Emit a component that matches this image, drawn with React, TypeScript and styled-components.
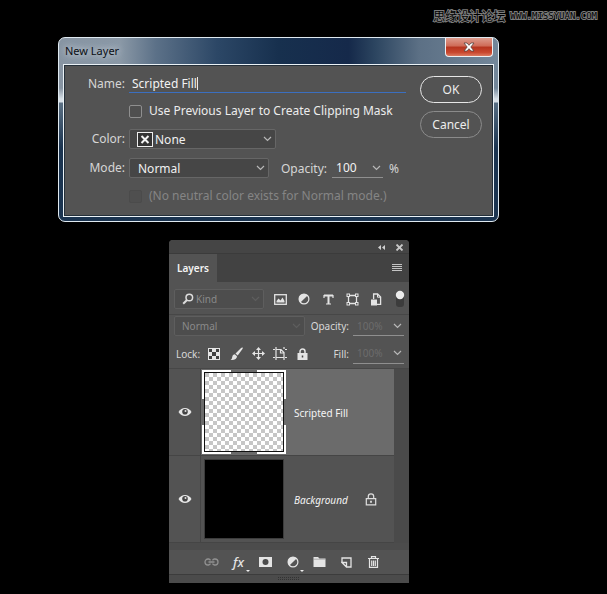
import React from "react";
import styled, { createGlobalStyle, css } from "styled-components";

const Global = createGlobalStyle`
  * { box-sizing: border-box; }
  body { margin: 0; background: #000; font-family: "Noto Sans", "Open Sans", sans-serif; }
  button, input, select { font: inherit; color: inherit; margin: 0; }
  button { padding: 0; background: none; border: 0; }
`;

const Page = styled.main`
  min-height: 100vh;
  background: #000;
`;

const Watermark = styled.header`
  display: flex;
  justify-content: flex-end;
  align-items: center;
  gap: 5px;
  height: 37px;
  padding: 0 10px 5px;
  color: #000;
  -webkit-text-stroke: 2px #7c7c7c;
  paint-order: stroke fill;
`;

const ForumName = styled.span`
  font: 12px/16px "Noto Sans CJK SC", sans-serif;
`;

const ForumSite = styled.span`
  font: 9px/16px "DejaVu Sans Mono", monospace;
`;

const Desktop = styled.div`
  padding: 0 108px 11px 58px;
`;

/* ---------- New Layer dialog ---------- */

const Dialog = styled.section`
  border: 1px solid #dfe9f0;
  border-radius: 7px;
  padding: 0 4px 4px;
  background:
    linear-gradient(to bottom, transparent 0, transparent 50px, rgba(225, 232, 238, 0.9) 61px, rgba(225, 232, 238, 0.9) 64px, rgba(74, 98, 120, 0.7) 65px, #1b3450 110px),
    linear-gradient(to right, #8794a2 0, #8a98a6 14%, #5c7188 22%, #2c4766 36%, #17304e 50%, #15294a 66%, #2c4560 72%, #5c7085 82%, #73879a 100%);
`;

const TitleBar = styled.header`
  display: flex;
  justify-content: space-between;
  align-items: flex-start;
  height: 26px;
  padding: 0 1px 0 2px;
`;

const Title = styled.h1`
  margin: 4px 0 0;
  font-size: 11px;
  line-height: 17px;
  font-weight: 400;
  color: #0b0f14;
  text-shadow: 0 0 6px #cdd6de, 0 0 8px #b9c4cf;
`;

const WindowClose = styled.button`
  display: grid;
  place-items: center;
  width: 48px;
  height: 19px;
  border: 1px solid #eef0f2;
  border-top: 0;
  border-radius: 0 0 4px 4px;
  background: linear-gradient(#dd9c8e 0, #cf6a56 45%, #b5331e 50%, #c9472e 80%, #dd7a60 100%);
`;

const DialogBody = styled.form`
  display: flex;
  justify-content: space-between;
  gap: 14px;
  padding: 10px 11px 11px 0;
  border: 1px solid #eaf1f5;
  box-shadow: inset 0 0 0 1px #25303a;
  background: #535353;
  color: #d6d6d6;
  font-size: 12px;
`;

const Fields = styled.div`
  flex: 1;
  min-width: 0;
  display: grid;
  grid-template-columns: 61px minmax(0, 1fr);
  grid-template-rows: 18px 18px 20px 20px 18px;
  column-gap: 4px;
  row-gap: 9px;
  align-items: center;
`;

const FieldLabel = styled.label`
  text-align: right;
  line-height: 18px;
`;

const NameField = styled.div`
  display: flex;
  align-items: center;
  height: 18px;
  padding-left: 3px;
  border-bottom: 1px solid #3b6fc0;
`;

const NameInput = styled.input`
  field-sizing: content;
  max-width: 95%;
  height: 17px;
  padding: 0;
  border: 0;
  outline: 0;
  background: transparent;
  color: #f2f2f2;
  caret-color: transparent;
`;

const Caret = styled.span`
  width: 1px;
  height: 13px;
  background: #e8e8e8;
`;

const CheckRow = styled.label<{ $off?: boolean }>`
  grid-column: 2;
  display: flex;
  align-items: center;
  gap: 7px;
  line-height: 18px;
  white-space: nowrap;
  color: ${(p) => (p.$off ? "#858585" : "#ececec")};
`;

const Check = styled.input`
  appearance: none;
  flex: none;
  width: 13px;
  height: 13px;
  margin: 0;
  border: 1px solid #8f8f8f;
  border-radius: 2px;
  background: #4f4f4f;
  &:disabled { border-color: #4b4b4b; }
`;

const Inline = styled.div`
  display: flex;
  align-items: center;
`;

const SelectBox = styled.div<{ $w: number; $dim?: boolean }>`
  display: grid;
  grid-template-columns: auto 1fr auto;
  align-items: center;
  flex: none;
  width: ${(p) => p.$w}px;
  height: 20px;
  border: 1px solid #666;
  border-radius: 2px;
  background: #464646;
  ${(p) => p.$dim && css`
    border-color: #5e5e5e;
    background: #4d4d4d;
  `}
  > * { grid-row: 1; }
  > svg { pointer-events: none; z-index: 1; }
  > svg:first-child { grid-column: 1; margin-left: 7px; }
  > svg:last-child { grid-column: 3; margin-right: 3px; }
`;

const Select = styled.select<{ $pad: number }>`
  appearance: none;
  grid-column: 1 / -1;
  width: 100%;
  height: 18px;
  padding: 0 16px 0 ${(p) => p.$pad}px;
  border: 0;
  outline: 0;
  background: transparent;
  color: #f0f0f0;
  &:disabled { color: #8a8a8a; opacity: 1; }
`;

const Amount = styled.div<{ $dim?: boolean }>`
  display: flex;
  align-items: center;
  flex: none;
  width: 51px;
  height: 20px;
  padding-right: 2px;
  border-bottom: 1px solid #8f8f8f;
  color: ${(p) => (p.$dim ? "#6c6c6c" : "#f2f2f2")};
  input {
    flex: 1;
    min-width: 0;
    height: 18px;
    padding: 0 0 0 4px;
    border: 0;
    outline: 0;
    background: transparent;
  }
  button { display: grid; place-items: center; }
`;

const OpacityLabel = styled.label`
  margin: 0 5px 0 12px;
`;

const Percent = styled.span`
  margin-left: 6px;
`;

const Actions = styled.div`
  display: flex;
  flex-direction: column;
  gap: 8px;
  padding-top: 1px;
`;

const PillButton = styled.button<{ $primary?: boolean }>`
  width: 62px;
  height: 27px;
  border: 1px solid ${(p) => (p.$primary ? "#e6e6e6" : "#8b8b8b")};
  border-radius: 14px;
  color: #ededed;
`;

/* ---------- Layers panel ---------- */

const Panel = styled.aside`
  width: 240px;
  max-width: 100%;
  margin: 18px 0 0 111px;
  border-radius: 4px 4px 0 0;
  overflow: hidden;
  background: #535353;
  color: #d8d8d8;
  font-size: 10px;
`;

const PanelTop = styled.div`
  display: flex;
  justify-content: flex-end;
  align-items: center;
  gap: 9px;
  height: 14px;
  padding: 2px 5px 0 0;
  background: #454545;
  border-bottom: 1px solid #3b3b3b;
  button { display: grid; }
`;

const TabBar = styled.div`
  display: flex;
  justify-content: space-between;
  align-items: center;
  height: 28px;
  padding-right: 7px;
  background: #424242;
`;

const Tab = styled.button`
  width: 48px;
  height: 28px;
  background: #535353;
  color: #f4f4f4;
  font-weight: 600;
`;

const IconButton = styled.button<{ $w?: number }>`
  display: grid;
  place-items: center;
  flex: none;
  width: ${(p) => p.$w ?? 24}px;
  height: 20px;
  color: #e4e4e4;
`;

const FilterRow = styled.div`
  display: flex;
  align-items: center;
  height: 33px;
  padding: 2px 2px 0 5px;
  border-bottom: 1px solid #474747;
`;

const FilterIcons = styled.div`
  display: flex;
  flex: 1;
  padding-left: 4px;
  > :last-child { margin-left: 5px; }
`;

const ModeRow = styled.div`
  display: flex;
  align-items: center;
  height: 22px;
  padding: 0 5px;
`;

const LockRow = styled.div`
  display: flex;
  align-items: center;
  height: 32px;
  padding: 2px 5px 0 7px;
  border-bottom: 1px solid #474747;
`;

const LockLabel = styled.span`
  width: 27px;
`;

const RightLabel = styled.label`
  flex: 1;
  padding-right: 4px;
  text-align: right;
`;

const LayerArea = styled.div`
  display: grid;
  grid-template-columns: 1fr 15px;
  background: #4a4a4a;
  border-bottom: 7px solid #4c4c4c;
`;

const LayerList = styled.ul`
  margin: 0;
  padding: 0;
  list-style: none;
`;

const Layer = styled.li<{ $on?: boolean }>`
  display: grid;
  grid-template-columns: 32px 86px 1fr auto;
  align-items: center;
  height: 87px;
  border-bottom: 1px solid #454545;
  background: ${(p) => (p.$on ? "#6b6b6b" : "#535353")};
`;

const EyeCell = styled.button`
  display: grid;
  place-items: center;
  height: 86px;
  background: #535353;
  border-right: 1px solid #454545;
`;

const ThumbFrame = styled.div`
  display: grid;
  place-items: center;
  width: 84px;
  height: 84px;
  margin-left: 1px;
  > * { grid-area: 1 / 1; }
`;

const Thumb = styled.div<{ $solid?: boolean }>`
  width: 80px;
  height: 80px;
  border: 1px solid ${(p) => (p.$solid ? "#3c3c3c" : "#111")};
  ${(p) => p.$solid
    ? css`background: #000;`
    : css`background: repeating-conic-gradient(#fff 0 25%, #c6c6c6 0 50%) 0 0 / 8px 8px;`}
`;

const LayerName = styled.span<{ $italic?: boolean }>`
  padding: 2px 0 0 7px;
  color: #f4f4f4;
  font-style: ${(p) => (p.$italic ? "italic" : "normal")};
`;

const LockMark = styled.span`
  display: grid;
  margin-right: 17px;
`;

const PanelFooter = styled.footer`
  display: flex;
  align-items: center;
  height: 25px;
  padding: 0 22px 0 29px;
  border-bottom: 1px solid #3c3c3c;
`;

const Grip = styled.div`
  display: grid;
  place-items: center;
  height: 8px;
  background: #4b4b4b;
`;

/* ---------- icons ---------- */

const Chevron = ({ color = "#b8b8b8" }: { color?: string }) => (
  <svg width="9" height="6" viewBox="0 0 9 6" fill="none" stroke={color} strokeWidth="1.2">
    <path d="M1 1l3.5 3.5L8 1" />
  </svg>
);

const NoneSwatch = () => (
  <svg width="16" height="15" viewBox="0 0 16 15">
    <rect x="0.5" y="0.5" width="15" height="14" fill="#333" stroke="#eee" />
    <path d="M4.5 4l7 7m0-7l-7 7" stroke="#f4f4f4" strokeWidth="2" />
  </svg>
);

const CloseGlyph = () => (
  <svg width="12" height="10" viewBox="0 0 12 10">
    <path d="M1 1h3l2 2.3L8 1h3L7.8 5 11 9H8L6 6.7 4 9H1l3.2-4z" fill="#fff" stroke="#56423f" strokeWidth="0.8" />
  </svg>
);

const Search = () => (
  <svg width="12" height="12" viewBox="0 0 12 12" fill="none" stroke="#dcdcdc">
    <circle cx="7.3" cy="4.5" r="3.3" strokeWidth="1.5" />
    <path d="M5 7L1.2 10.8" strokeWidth="2" />
  </svg>
);

const Picture = () => (
  <svg width="13" height="11" viewBox="0 0 13 11">
    <rect x="0.7" y="0.7" width="11.6" height="9.6" fill="none" stroke="currentColor" strokeWidth="1.3" />
    <path d="M2.5 8.5V7l2-2.5 2 2 2-3L10.5 7v1.5z" fill="currentColor" />
  </svg>
);

const Adjust = () => (
  <svg width="12" height="12" viewBox="0 0 12 12">
    <circle cx="6" cy="6" r="4.9" fill="#555" stroke="currentColor" strokeWidth="1.2" />
    <path d="M9.6 2.4A5 5 0 1 0 2.4 9.6z" fill="currentColor" />
  </svg>
);

const TypeGlyph = () => (
  <svg width="11" height="11" viewBox="0 0 11 11" fill="none" stroke="currentColor">
    <path d="M1 1.5h9M5.5 1v9" strokeWidth="2" />
    <path d="M1 1v3M10 1v3M3 10h5" strokeWidth="1.2" />
  </svg>
);

const Shape = () => (
  <svg width="13" height="13" viewBox="0 0 13 13" fill="none" stroke="currentColor">
    <path d="M3.5 2.500h6M3.500 10.500h6M2.500 3.500v6M10.500 3.500v6" strokeWidth="1.300" />
    <g fill="#535353">
      <rect x="1" y="1" width="2.500" height="2.500" />
      <rect x="9.500" y="1" width="2.500" height="2.500" />
      <rect x="1" y="9.500" width="2.500" height="2.500" />
      <rect x="9.500" y="9.500" width="2.500" height="2.500" />
    </g>
  </svg>
);

const SmartObject = () => (
  <svg width="12" height="13" viewBox="0 0 12 13">
    <path d="M3.6 6V1h4l3 3v7.4H7" fill="none" stroke="currentColor" strokeWidth="1.3" />
    <path d="M7.5 1v3.2h3" fill="none" stroke="currentColor" />
    <rect x="1" y="6.5" width="6" height="6" fill="currentColor" />
  </svg>
);

const Toggle = () => (
  <svg width="10" height="18" viewBox="0 0 10 18">
    <rect x="1" y="1" width="8" height="16" rx="3" fill="#3c3c3c" />
    <circle cx="5" cy="5" r="4.2" fill="#ececec" />
  </svg>
);

const CheckerIcon = () => (
  <svg width="12" height="12" viewBox="0 0 12 12">
    <rect x="0.5" y="0.5" width="11" height="11" fill="#3f3f3f" stroke="currentColor" />
    <path d="M4 1h4v3H4zM1 4h3v4H1zM8 4h3v4H8zM4 8h4v3H4z" fill="currentColor" />
  </svg>
);

const Brush = () => (
  <svg width="13" height="14" viewBox="0 0 13 14" fill="currentColor">
    <path d="M12.6 0.6c.5.5 0 1.300-.5 2L7.700 8.500 5.500 6.600 10.800 1.300c.6-.6 1.300-1.200 1.800-.7z" />
    <path d="M4.800 7.300l2.200 2c0 2.600-2.700 4.200-6.500 3.700 1.900-.9 1.300-2.200 2-4 .4-1 1.300-1.700 2.300-1.700z" />
  </svg>
);

const Move = () => (
  <svg width="13" height="13" viewBox="0 0 13 13">
    <path d="M6.500 2v9M2 6.500h9" stroke="currentColor" strokeWidth="1.200" />
    <path d="M6.500 0L9 3H4zM6.500 13L9 10H4zM0 6.500L3 4v5zM13 6.500L10 4v5z" fill="currentColor" />
  </svg>
);

const Artboard = () => (
  <svg width="14" height="13" viewBox="0 0 14 13" fill="none" stroke="currentColor" strokeWidth="1.200">
    <path d="M3 0v2M0 2.500h2M11 0v2M12 2.500h2M3 11v2M0 10.500h2M11 11v2M12 10.500h2" />
    <path d="M3 2.500h5l3 3v5H3zM7.500 3v3H11" />
  </svg>
);

const LockIcon = () => (
  <svg width="11" height="12" viewBox="0 0 11 12">
    <path d="M3 6V3.500a2.500 2.500 0 0 1 5 0V6" fill="none" stroke="currentColor" strokeWidth="1.500" />
    <path d="M0.500 5h10v7h-10z" fill="currentColor" />
    <path d="M5.500 7.500v2" stroke="#444" strokeWidth="1.500" />
  </svg>
);

const LockOutline = () => (
  <svg width="12" height="13" viewBox="0 0 12 13" fill="none" stroke="#dedede" strokeWidth="1.200">
    <path d="M3.300 5.500V3.600a2.700 2.700 0 0 1 5.400 0v1.900M1.300 5.600h9.400v6.200H1.300z" />
    <path d="M6 7.700v2" strokeWidth="1.800" />
  </svg>
);

const Eye = () => (
  <svg width="14" height="10" viewBox="0 0 14 10">
    <path d="M0.500 5C3.500-.3 10.500-.3 13.500 5 10.500 10.300 3.500 10.300.5 5z" fill="#e8e8e8" />
    <circle cx="7" cy="4.800" r="2.800" fill="#444" />
    <circle cx="7.500" cy="4" r="1" fill="#e0e0e0" />
  </svg>
);

const Brackets = () => (
  <svg width="84" height="84" viewBox="0 0 84 84" fill="none" stroke="#fff" strokeWidth="2">
    <path d="M1 29V1h28M55 1h28v28M83 55v28H55M29 83H1V55" />
  </svg>
);

const Link = () => (
  <svg width="15" height="8" viewBox="0 0 15 8" fill="none" stroke="#929292" strokeWidth="1.300">
    <path d="M6.500 2.300A3 3 0 0 0 4.500 1H4a3 3 0 0 0 0 6h.5a3 3 0 0 0 2-1.300M8.500 2.300a3 3 0 0 1 2-1.300h.5a3 3 0 0 1 0 6h-.5a3 3 0 0 1-2-1.300M4.500 4h6" />
  </svg>
);

const Effects = styled.span`
  font-size: 13px;
  line-height: 16px;
  font-style: italic;
  font-weight: 500;
`;

const MenuButton = styled(IconButton)`
  position: relative;
  &::after {
    content: "";
    position: absolute;
    right: 2px;
    bottom: 0;
    border: 2px solid transparent;
    border-top-color: #eee;
    border-bottom: 0;
  }
`;

const Mask = () => (
  <svg width="13" height="10" viewBox="0 0 13 10">
    <rect width="13" height="10" fill="currentColor" />
    <circle cx="6.500" cy="5" r="3" fill="#4b4b4b" />
  </svg>
);

const Folder = () => (
  <svg width="13" height="10" viewBox="0 0 13 10">
    <path d="M.5 0h4.500l1.500 1.500h6V10H.5z" fill="currentColor" />
    <path d="M.5 2.200h12" stroke="#8c8c8c" strokeWidth="0.600" />
  </svg>
);

const NewLayerIcon = () => (
  <svg width="11" height="11" viewBox="0 0 11 11" fill="none" stroke="currentColor" strokeWidth="1.300">
    <path d="M1 5V1h9v9H5.500L1 5.500h4.500V10" />
  </svg>
);

const Trash = () => (
  <svg width="11" height="12" viewBox="0 0 11 12" fill="none" stroke="currentColor" strokeWidth="1.200">
    <path d="M0 2.500h11M3.500 2V.6h4V2M1.500 3v8.400h8V3M3.700 4.500v5.500M5.500 4.500v5.500M7.300 4.500v5.500" />
  </svg>
);

export default function App() {
  return (
    <Page>
      <Global />
      <Watermark>
        <ForumName>思缘设计论坛</ForumName>
        <ForumSite>WWW.MISSYUAN.COM</ForumSite>
      </Watermark>
      <Desktop>
        <Dialog role="dialog" aria-labelledby="dialog-title">
          <TitleBar>
            <Title id="dialog-title">New Layer</Title>
            <WindowClose aria-label="Close"><CloseGlyph /></WindowClose>
          </TitleBar>
          <DialogBody onSubmit={(e) => e.preventDefault()}>
            <Fields>
              <FieldLabel htmlFor="name">Name:</FieldLabel>
              <NameField>
                <NameInput id="name" defaultValue="Scripted Fill" />
                <Caret />
              </NameField>
              <CheckRow>
                <Check type="checkbox" />
                Use Previous Layer to Create Clipping Mask
              </CheckRow>
              <FieldLabel htmlFor="color">Color:</FieldLabel>
              <SelectBox $w={147}>
                <NoneSwatch />
                <Select id="color" $pad={25}><option>None</option></Select>
                <Chevron />
              </SelectBox>
              <FieldLabel htmlFor="mode">Mode:</FieldLabel>
              <Inline>
                <SelectBox $w={140}>
                  <Select id="mode" $pad={8}><option>Normal</option></Select>
                  <Chevron />
                </SelectBox>
                <OpacityLabel htmlFor="opacity">Opacity:</OpacityLabel>
                <Amount>
                  <input id="opacity" defaultValue="100" />
                  <button type="button" aria-label="Opacity slider"><Chevron /></button>
                </Amount>
                <Percent>%</Percent>
              </Inline>
              <CheckRow $off>
                <Check type="checkbox" disabled />
                (No neutral color exists for Normal mode.)
              </CheckRow>
            </Fields>
            <Actions>
              <PillButton $primary type="submit">OK</PillButton>
              <PillButton type="button">Cancel</PillButton>
            </Actions>
          </DialogBody>
        </Dialog>

        <Panel aria-label="Layers panel">
          <PanelTop>
            <button aria-label="Collapse">
              <svg width="9" height="5" viewBox="0 0 9 5" fill="#d0d0d0"><path d="M4 0v5L1 2.500zM8 0v5L5 2.500z" /></svg>
            </button>
            <button aria-label="Close panel">
              <svg width="9" height="7" viewBox="0 0 9 7" stroke="#c8c8c8" strokeWidth="1.800"><path d="M1.500.5l6 6m0-6l-6 6" /></svg>
            </button>
          </PanelTop>
          <TabBar role="tablist">
            <Tab role="tab" aria-selected>Layers</Tab>
            <IconButton $w={11} aria-label="Panel menu">
              <svg width="10" height="8" viewBox="0 0 10 8" stroke="#c4c4c4"><path d="M0 .5h10M0 2.500h10M0 4.500h10M0 6.500h10" /></svg>
            </IconButton>
          </TabBar>
          <FilterRow>
            <SelectBox $w={90} $dim>
              <Search />
              <Select aria-label="Filter kind" $pad={21} disabled><option>Kind</option></Select>
              <Chevron color="#5e5e5e" />
            </SelectBox>
            <FilterIcons>
              <IconButton aria-label="Pixel layers"><Picture /></IconButton>
              <IconButton aria-label="Adjustment layers"><Adjust /></IconButton>
              <IconButton aria-label="Type layers"><TypeGlyph /></IconButton>
              <IconButton aria-label="Shape layers"><Shape /></IconButton>
              <IconButton aria-label="Smart objects"><SmartObject /></IconButton>
              <IconButton $w={14} aria-label="Filtering on or off"><Toggle /></IconButton>
            </FilterIcons>
          </FilterRow>
          <ModeRow>
            <SelectBox $w={131} $dim>
              <Select aria-label="Blend mode" $pad={7} disabled><option>Normal</option></Select>
              <Chevron color="#5e5e5e" />
            </SelectBox>
            <RightLabel htmlFor="layer-opacity">Opacity:</RightLabel>
            <Amount $dim>
              <input id="layer-opacity" defaultValue="100%" />
              <button aria-label="Layer opacity slider"><Chevron /></button>
            </Amount>
          </ModeRow>
          <LockRow>
            <LockLabel>Lock:</LockLabel>
            <IconButton $w={22} aria-label="Lock transparency"><CheckerIcon /></IconButton>
            <IconButton $w={22} aria-label="Lock pixels"><Brush /></IconButton>
            <IconButton $w={22} aria-label="Lock position"><Move /></IconButton>
            <IconButton $w={22} aria-label="Lock artboard"><Artboard /></IconButton>
            <IconButton $w={22} aria-label="Lock all"><LockIcon /></IconButton>
            <RightLabel htmlFor="layer-fill">Fill:</RightLabel>
            <Amount $dim>
              <input id="layer-fill" defaultValue="100%" />
              <button aria-label="Fill slider"><Chevron /></button>
            </Amount>
          </LockRow>
          <LayerArea>
            <LayerList>
              <Layer $on>
                <EyeCell aria-label="Hide Scripted Fill"><Eye /></EyeCell>
                <ThumbFrame><Thumb /><Brackets /></ThumbFrame>
                <LayerName>Scripted Fill</LayerName>
              </Layer>
              <Layer>
                <EyeCell aria-label="Hide Background"><Eye /></EyeCell>
                <ThumbFrame><Thumb $solid /></ThumbFrame>
                <LayerName $italic>Background</LayerName>
                <LockMark><LockOutline /></LockMark>
              </Layer>
            </LayerList>
          </LayerArea>
          <PanelFooter>
            <IconButton $w={27} aria-label="Link layers"><Link /></IconButton>
            <MenuButton $w={27} aria-label="Layer style"><Effects>fx</Effects></MenuButton>
            <IconButton $w={27} aria-label="Add mask"><Mask /></IconButton>
            <MenuButton $w={27} aria-label="New adjustment layer"><Adjust /></MenuButton>
            <IconButton $w={27} aria-label="New group"><Folder /></IconButton>
            <IconButton $w={27} aria-label="New layer"><NewLayerIcon /></IconButton>
            <IconButton $w={27} aria-label="Delete layer"><Trash /></IconButton>
          </PanelFooter>
          <Grip>
            <svg width="22" height="4" viewBox="0 0 22 4" stroke="#333" strokeDasharray="1 1"><path d="M0 .5h22M0 2.500h22" /></svg>
          </Grip>
        </Panel>
      </Desktop>
    </Page>
  );
}
